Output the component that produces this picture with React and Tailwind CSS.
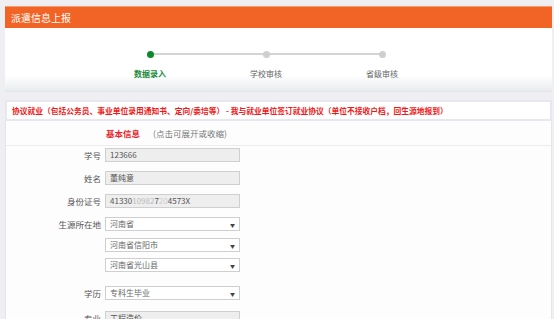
const cjk = { fontFamily: '"Noto Sans CJK SC", "Noto Sans", sans-serif' };

const steps = [
  { label: "数据录入", active: true },
  { label: "学校审核", active: false },
  { label: "省级审核", active: false },
];

function Stepper() {
  return (
    <div className="h-[64px] bg-gradient-to-b from-white from-75% to-[#e9ecef] border-b border-[#e2e4e8]">
      <div className="relative ml-[142px] w-[239px] pt-[23px]">
        <div className="absolute left-[5px] right-[5px] top-[25px] h-[2px] bg-[#d4d4d4]" />
        <div className="relative flex justify-between">
          {steps.map((s) => (
            <div
              key={s.label}
              className={`w-[7px] h-[7px] rounded-full ${s.active ? "bg-[#0a8a2a]" : "bg-[#cfcfcf]"}`}
            />
          ))}
        </div>
      </div>
      <div className="flex ml-[87px] mt-[11px]">
        {steps.map((s) => (
          <div
            key={s.label}
            className={`w-[116px] text-center text-[8px] leading-[10px] ${s.active ? "text-[#1a8a3a] font-bold" : "text-[#666]"}`}
          >
            {s.label}
          </div>
        ))}
      </div>
    </div>
  );
}

function Row({ label, value, select, mt = "mt-[9px]" }) {
  return (
    <div className={`flex items-center ${mt}`}>
      <div className="w-[99px] pr-[4px] text-right text-[8.5px] text-[#555]">{label}</div>
      <div
        className={`relative w-[135px] h-[14px] border border-[#cfcfcf] flex items-center pl-[4px] text-[8px] ${
          select ? "bg-white text-[#666]" : "bg-[#eeeeee] text-[#555]"
        }`}
      >
        {value}
        {select && (
          <span className="absolute right-[4px] top-[3px] text-[5px] text-[#444]">▼</span>
        )}
      </div>
    </div>
  );
}

export default function App() {
  return (
    <div className="w-[554px] h-[319px] overflow-hidden bg-[#eeeef3] pt-[6px] pl-[5px] pr-[2px]" style={cjk}>
      {/* header */}
      <div className="h-[22px] bg-[#f26426] border-t border-[#f79a72] flex items-center pl-[6px] text-white text-[10px]">
        派遣信息上报
      </div>

      <Stepper />

      <div className="h-[8px]" />

      {/* notice */}
      <div className="h-[21px] bg-white border-2 border-[#e7e7f0] flex items-center pl-[5px] text-[7.75px] font-bold text-[#f01818] whitespace-nowrap">
        协议就业（包括公务员、事业单位录用通知书、定向/委培等） - 我与就业单位签订就业协议（单位不接收户档，回生源地报到）
      </div>

      {/* form */}
      <div className="bg-[#fdfdfd] border-l border-r border-[#e6e6ea] h-[200px]">
        <div className="h-[25px] border-b border-[#ececef] flex items-center pl-[100px] text-[8.5px]">
          <span className="text-[#e8242a] font-bold">基本信息</span>
          <span className="ml-[13px] text-[#777]">(点击可展开或收缩)</span>
        </div>
        <Row label="学号" value="123666" mt="mt-[2px]" />
        <Row label="姓名" value="董纯意" />
        <Row label="身份证号" value={<span className="text-[#555]">41330<span className="text-[#bbb]">10982</span>7<span className="text-[#ccc]">20</span>4573X</span>} />
        <Row label="生源所在地" value="河南省" select />
        <Row label="" value="河南省信阳市" select mt="mt-[7px]" />
        <Row label="" value="河南省光山县" select mt="mt-[6px]" />
        <Row label="学历" value="专科生毕业" select mt="mt-[14px]" />
        <Row label="专业" value="工程造价" mt="mt-[11px]" />
      </div>
    </div>
  );
}
